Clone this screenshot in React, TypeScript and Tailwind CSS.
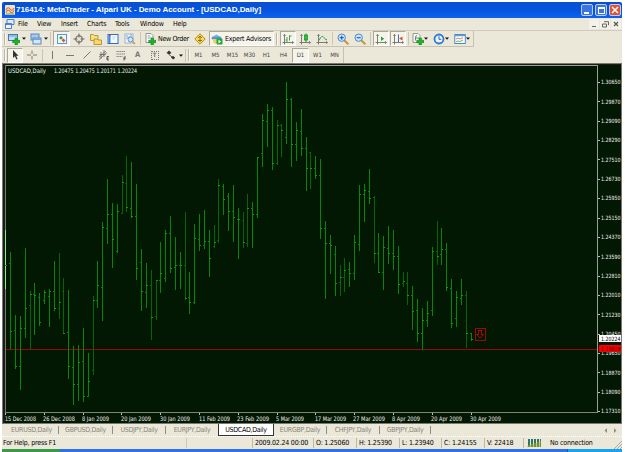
import React from "react";

const ui = "font-['DejaVu_Sans_Condensed','Noto_Sans',sans-serif]";

// x, high, low, open, close
const bars: number[][] = [
  [5,230,289,262,265],[10,252,349,263,331],[15,315,369,330,366],[20,316,390,366,328],[25,248,338,328,308],
  [30,291,349,305,294],[34,283,335,294,295],[39,293,326,297,322],[44,290,304,300,292],[49,289,327,296,291],
  [54,261,311,291,308],[59,253,319,308,302],[63,278,334,291,333],[68,290,379,332,366],[73,346,405,367,384],
  [78,345,401,384,362],[83,328,402,361,396],[88,353,397,396,381],[93,296,375,370,300],[97,261,308,300,285],
  [102,222,321,287,227],[107,179,244,228,214],[112,203,268,214,239],[117,204,253,251,211],[122,175,214,213,182],
  [126,156,212,183,207],[131,162,218,208,216],[136,184,280,216,268],[141,249,311,262,291],[146,263,308,292,285],
  [151,270,340,285,317],[156,280,320,316,280],[160,242,293,280,273],[165,230,282,278,233],[170,216,273,233,268],
  [175,237,290,267,265],[180,252,289,265,265],[185,212,300,265,298],[189,272,314,297,302],[194,224,304,302,238],
  [199,214,251,239,245],[204,210,249,245,241],[209,230,277,241,258],[214,225,248,246,242],[218,179,243,240,185],
  [223,184,215,186,199],[228,193,231,196,211],[233,185,242,211,217],[238,208,259,219,219],[243,212,248,220,242],
  [247,194,247,243,208],[252,202,248,208,214],[257,157,218,214,157],[262,114,167,153,120],[267,104,147,121,110],
  [272,107,170,110,163],[277,120,165,163,125],[281,124,157,125,130],[286,82,144,137,99],[291,98,167,99,144],
  [296,122,161,144,130],[301,109,156,131,148],[306,137,191,148,168],[310,152,189,152,168],[315,156,179,168,175],
  [320,159,239,175,228],[325,221,299,228,243],[330,235,274,243,245],[335,246,296,254,283],[340,265,296,282,277],
  [344,258,292,277,270],[349,262,287,269,273],[354,235,280,273,242],[359,185,251,244,194],[364,184,222,194,190],
  [369,169,204,191,198],[374,196,263,197,253],[378,233,273,253,272],[383,236,290,272,247],[388,226,264,248,253],
  [393,230,270,253,256],[398,246,294,256,284],[403,272,287,283,281],[407,272,305,283,295],[412,286,330,295,311],
  [417,299,342,310,333],[422,308,350,333,320],[427,301,327,320,313],[432,247,316,310,251],[437,221,265,251,256],
  [441,228,265,254,249],[446,243,291,249,287],[451,279,328,288,323],[456,291,327,318,297],[461,279,305,298,295],
  [466,291,348,295,333],[471,333,341,333,339],
];
const dim = new Set([30, 59, 63, 93, 122, 126, 151, 156, 185, 214, 218, 243, 247, 277, 281, 310, 340, 344, 374, 403, 407, 437, 466]);
const prices = ["1.30650","1.29870","1.29090","1.28290","1.27510","1.26730","1.25950","1.25150","1.24370","1.23590","1.22810","1.22010","1.21230","1.20450","1.19650","1.18870","1.18090","1.17310"];
const dates: [number, string, number][] = [
  [5,"15 Dec 2008",31],[43,"26 Dec 2008",32],[82,"8 Jan 2009",27],[121,"20 Jan 2009",30],[160,"30 Jan 2009",30],
  [199,"11 Feb 2009",31],[237,"23 Feb 2009",32],[276,"5 Mar 2009",28],[315,"17 Mar 2009",31],[353,"27 Mar 2009",32],
  [392,"8 Apr 2009",28],[431,"20 Apr 2009",31],[470,"30 Apr 2009",31],
];

function Chart() {
  return (
    <svg width="620" height="361" viewBox="2 63 620 361" className="block shrink-0 font-['DejaVu_Sans_Condensed',sans-serif]">
      <rect x="2" y="63" width="620" height="361" fill="#77786f" />
      <rect x="3" y="64" width="618" height="359" fill="#1b1b19" />
      <rect x="5" y="65" width="616" height="358" fill="#031803" />
      <g shapeRendering="crispEdges">
        <path d="M5 65.5H597.5V413" fill="none" stroke="#9a9d98" />
        <path d="M5.500 65V413" stroke="#777c77" />
        <path d="M5 412.500H598" stroke="#7f847f" />
        <path d="M5.500 230V289" stroke="#8bef8b" />
        <rect x="6" y="349" width="591" height="1" fill="#9b0808" />
        {bars.map(([x, h, l, o, c], i) => (
          <g key={x} fill={dim.has(x) ? "#066606" : "#068606"}>
            {i > 0 && <rect x={x} y={h} width="1" height={l - h} />}
            {i > 0 && <rect x={x - 1} y={o} width="1" height="1" />}
            <rect x={x} y={c} width="2" height="1" fill="#08a008" />
          </g>
        ))}
        {dates.map(([x], i) => <rect key={x} x={Math.round(5 + i * 38.8)} y="413" width="1" height="2" fill="#b9bcb9" />)}
        {prices.map((p, i) => <rect key={p} x="598" y={Math.round(82 + i * 19.36)} width="2" height="1" fill="#b9bcb9" />)}
        <rect x="475.500" y="328.500" width="10" height="12" fill="none" stroke="#a00808" />
        <path d="M478.500 330.500h3v4h2l-3.500 3.500l-3.500-3.500h2z" fill="none" stroke="#9a0a0a" />
      </g>
      <g fontSize="6.2" fill="#f0f2f0">
        <text x="8" y="73" textLength="38" lengthAdjust="spacingAndGlyphs">USDCAD,Daily</text>
        <text x="54" y="73" textLength="83" lengthAdjust="spacingAndGlyphs">1.20475 1.20475 1.20171 1.20224</text>
        {dates.map(([x, t, w]) => <text key={x} x={x} y="420.500" textLength={w} lengthAdjust="spacingAndGlyphs">{t}</text>)}
        {prices.map((p, i) => <text key={p} x="601" y={84.3 + i * 19.36} fontSize="5.8" textLength="19.4" lengthAdjust="spacingAndGlyphs">{p}</text>)}
      </g>
      <rect x="599" y="335" width="22" height="7" fill="#fff" />
      <rect x="599" y="345" width="22" height="7" fill="#f80000" />
      <g fontSize="5.8">
        <text x="601" y="341" fill="#000" textLength="19.4" lengthAdjust="spacingAndGlyphs">1.20224</text>
        <text x="601" y="350.800" fill="#5c0000" textLength="19.4" lengthAdjust="spacingAndGlyphs">1.19828</text>
      </g>
    </svg>
  );
}

function Ico({ children, w = 12 }: { children: React.ReactNode; w?: number }) {
  return <svg width={w} height="12" viewBox={`0 0 ${w} 12`} className="shrink-0">{children}</svg>;
}
function Cell({ w, on, children }: { w: string; on?: boolean; children?: React.ReactNode }) {
  return (
    <div className={`${w} flex h-[15px] shrink-0 items-center justify-center ${on ? "border border-t-[#a9a79a] border-l-[#a9a79a] border-r-white border-b-white bg-[#f5f3ea]" : ""}`}>
      {children}
    </div>
  );
}
const Grip = ({ w }: { w: string }) => <Cell w={w}><div className="h-[12px] w-[2px] border-l border-[#b9b6a6] bg-[#f8f7f0]" /></Cell>;
const Sep = ({ w }: { w: string }) => <Cell w={w}><div className="h-[13px] w-px bg-[#c9c6b6]" /></Cell>;
const Arr = ({ w }: { w: string }) => <Cell w={w}><svg width="4" height="3"><path d="M0 .5h4L2 2.700z" fill="#111" /></svg></Cell>;
const Plus = () => <path d="M7 5h2.500v2.300H12v2.400H9.500V12H7V9.700H4.700V7.300H7z" fill="#1fb32a" stroke="#0c7c18" strokeWidth=".5" />;
const Axes = () => <path d="M2.500 1.500v10M.500 9.500h11M1.300 2.700l1.200-1.300 1.200 1.300M10 8.300l1.400 1.200L10 10.700" fill="none" stroke="#6f6f6b" strokeWidth=".9" />;

function Lens({ minus }: { minus?: boolean }) {
  return <Ico><path d="M7.500 7.500l3.300 3.300" stroke="#c79a2c" strokeWidth="2" strokeLinecap="round" /><circle cx="4.700" cy="4.700" r="3.700" fill="#cfe6fb" stroke="#4a88d0" /><path d={minus ? "M2.700 4.700h4" : "M2.700 4.700h4M4.700 2.700v4"} stroke="#2468b8" strokeWidth="1.200" /></Ico>;
}

function Toolbar1() {
  return (
    <div className="flex h-[16px] w-[472px] shrink-0 items-center border-r border-b border-[#c5c2b2]">
      <Grip w="w-[5px]" />
      <Cell w="w-[14px]"><Ico><rect x=".5" y="1.500" width="9" height="6" fill="#c9def5" stroke="#3e79bb" /><path d="M1 3h8" stroke="#5a96dc" /><Plus /></Ico></Cell>
      <Arr w="w-[5px]" /><Cell w="w-[3px]" />
      <Cell w="w-[14px]"><Ico><rect x="1" y="1" width="8" height="6" fill="#a7c9ef" stroke="#5788c1" /><rect x="3" y="5" width="8" height="6" fill="#d6e7fa" stroke="#5788c1" /><path d="M3 6.200h8" stroke="#6d9ddc" strokeWidth="1.500" /></Ico></Cell>
      <Arr w="w-[5px]" /><Sep w="w-[5px]" />
      <Cell w="w-[17px]" on><Ico><rect x="1.500" y="1.500" width="9" height="9" fill="#eef6fd" stroke="#5a9ad4" /><path d="M3 5l2-2 2 2-2 1.500z" fill="#26a43a" /><path d="M5.500 7l2-1.500 2 2-2 2z" fill="#e0542e" /></Ico></Cell>
      <Cell w="w-[17px]"><Ico><circle cx="6" cy="6" r="3.200" fill="none" stroke="#6b6a65" strokeWidth="1.100" /><path d="M6 .500v4M6 7.500v4M.500 6h4M7.500 6h4" stroke="#6b6a65" strokeWidth="1.100" /></Ico></Cell>
      <Cell w="w-[17px]"><Ico><path d="M.500 1.500h3l1 1h3.500v5H.500z" fill="#f6df83" stroke="#b99935" /><path d="M4 6h3l1 1h3.500v4.500H4z" fill="#f9d967" stroke="#b99935" /></Ico></Cell>
      <Cell w="w-[17px]"><Ico><rect x="1" y="1.500" width="10" height="9" fill="#f5faff" stroke="#2f6fbe" /><path d="M2.500 2v8" stroke="#3f86d8" strokeWidth="2" /><path d="M5 4h4M5 6h3" stroke="#b7cce4" strokeWidth=".7" /><circle cx="3" cy="2.500" r=".7" fill="#e33" /></Ico></Cell>
      <Cell w="w-[17px]"><Ico><rect x="1" y="1" width="8" height="9" fill="#f5f7fb" stroke="#9cb3d0" /><path d="M3 2v4M5 3v5M7 1v5" stroke="#85a6ce" /><circle cx="6.500" cy="6.500" r="2.500" fill="#cfe6fb" stroke="#5e92cb" /><path d="M8.500 8.500l2.500 2.500" stroke="#c99f37" strokeWidth="1.600" /></Ico></Cell>
      <Sep w="w-[5px]" />
      <Cell w="w-[14px]"><Ico><path d="M2 .500h5l2 2v7H2z" fill="#fff" stroke="#8b9797" /><path d="M3.500 3h3M3.500 5h4" stroke="#7c8d8d" strokeWidth=".8" /><Plus /></Ico></Cell>
      <span className="w-[35px] shrink-0 pl-px text-[7px] leading-[10px] tracking-[-0.32px] whitespace-nowrap text-black">New Order</span>
      <Cell w="w-[16px]"><Ico><path d="M6 .800L11.200 6 6 11.200.800 6z" fill="#f7dc62" stroke="#b08c1c" /><path d="M6 3v6M4 5l2-2 2 2M4 7.500h4" fill="none" stroke="#8a6a10" strokeWidth=".9" /></Ico></Cell>
      <Cell w="w-[1px]" />
      <Cell w="w-[65px]" on>
        <Ico><ellipse cx="5.500" cy="5" rx="5" ry="2" fill="#4d97d9" /><path d="M2.500 4Q5.500-1 8.500 4z" fill="#72b3e7" /><path d="M2 6h5v3l-2.500 2L2 9z" fill="#f1ce5a" /><rect x="5.500" y="5.500" width="6" height="6" rx="1" fill="#22a63a" /><path d="M7.500 6.800v3.600l2.700-1.800z" fill="#fff" /></Ico>
        <span className="ml-[2px] w-[47px] text-[7px] leading-[10px] tracking-[-0.22px] whitespace-nowrap text-black">Expert Advisors</span>
      </Cell>
      <Grip w="w-[6px]" />
      <Cell w="w-[16px]" on><Ico><Axes /><path d="M5 4v5M7.500 2.500v5M7.500 3h2M3.500 7h1.500" stroke="#2d9d3c" strokeWidth=".9" /></Ico></Cell>
      <Cell w="w-[17px]"><Ico><Axes /><path d="M7 .500v8.500" stroke="#128a28" /><rect x="5.500" y="2" width="3" height="5" fill="#29c440" stroke="#128a28" strokeWidth=".7" /></Ico></Cell>
      <Cell w="w-[17px]"><Ico><Axes /><path d="M3 7.500Q6 1 8 4.500T11 6.500" fill="none" stroke="#3ba548" /></Ico></Cell>
      <Sep w="w-[4px]" />
      <Cell w="w-[17px]"><Lens /></Cell><Cell w="w-[17px]"><Lens minus /></Cell>
      <Sep w="w-[5px]" />
      <Cell w="w-[16px]" on><Ico><Axes /><path d="M6 3.500v4.500l3.200-2.200z" fill="#1da536" /></Ico></Cell>
      <Cell w="w-[1px]" />
      <Cell w="w-[16px]" on><Ico><Axes /><path d="M6.500 1.500v7.500" stroke="#3b6db4" /><path d="M10.500 3.500v4L7.200 5.500z" fill="#d8502a" /></Ico></Cell>
      <Sep w="w-[4px]" /><Cell w="w-[1px]" />
      <Cell w="w-[13px]"><Ico><path d="M1 .500h5l2 2v7H1z" fill="#f6f9f6" stroke="#8e9b8e" /><path d="M3 5h4M5 2.500q-1.500 0-1.500 2v3" fill="none" stroke="#566" strokeWidth=".8" /><Plus /></Ico></Cell>
      <Arr w="w-[4px]" /><Cell w="w-[4px]" />
      <Cell w="w-[13px]"><Ico><circle cx="6" cy="6" r="4.500" fill="#e9f4ff" stroke="#2f78cc" strokeWidth="1.800" /><path d="M6 3.200V6.300h2.300" fill="none" stroke="#29568e" strokeWidth=".9" /></Ico></Cell>
      <Arr w="w-[4px]" /><Cell w="w-[4px]" />
      <Cell w="w-[13px]"><Ico><rect x=".8" y="1.500" width="10.500" height="9" fill="#fff" stroke="#4c86c6" /><path d="M1 2.500h10" stroke="#5b9be0" strokeWidth="1.500" /><path d="M2 6l2-1 2 1 3-1.500" fill="none" stroke="#d05b32" strokeWidth=".8" /><path d="M2 9l2-1 2 .5 3-1.500" fill="none" stroke="#3ba548" strokeWidth=".8" /></Ico></Cell>
      <Arr w="w-[4px]" />
    </div>
  );
}

const frames = ["M1", "M5", "M15", "M30", "H1", "H4", "D1", "W1", "MN"];
function Toolbar2() {
  return (
    <div className="flex h-[16px] w-[342px] shrink-0 items-center border-r border-[#c5c2b2]">
      <Grip w="w-[5px]" />
      <Cell w="w-[16px]" on><Ico><path d="M4 1v8l1.900-1.700L7.300 10.500l1.300-.6L7.200 6.800H9.500z" fill="#333" /></Ico></Cell>
      <Cell w="w-[18px]"><Ico><path d="M6 1.500v3.500M6 7v3.500M1 6h4M7 6h4" stroke="#6f6f6a" strokeWidth=".9" /></Ico></Cell>
      <Sep w="w-[3px]" />
      <Cell w="w-[17px]"><Ico><path d="M5.500 2v8" stroke="#777" /></Ico></Cell>
      <Cell w="w-[17px]"><Ico><path d="M2 6.500h8" stroke="#777" /></Ico></Cell>
      <Cell w="w-[17px]"><Ico><path d="M2.500 9.500l7-7" stroke="#777" /></Ico></Cell>
      <Cell w="w-[17px]"><Ico><path d="M1 8l7-6M1 10.500l8-7M3 3v7M6 1v7M1.500 5.500h6" stroke="#666" strokeWidth=".8" /><path d="M11 7.500H9v3.500h2M9 9.200h1.700" fill="none" stroke="#333" strokeWidth=".8" /></Ico></Cell>
      <Cell w="w-[17px]"><Ico><path d="M1.500 2.500h9M1.500 5h9M1.500 7.500h6" stroke="#777" strokeWidth=".9" strokeDasharray="1.300 .5" /><path d="M11 8H9v3.500M9 9.700h1.700" fill="none" stroke="#333" strokeWidth=".8" /></Ico></Cell>
      <Cell w="w-[17px]"><span className="text-[7.500px] leading-none font-bold text-[#777]">A</span></Cell>
      <Cell w="w-[17px]"><div className="flex h-[9px] w-[8px] items-center justify-center border border-dotted border-[#777] text-[6px] leading-none font-bold text-[#777]">T</div></Cell>
      <Cell w="w-[15px]"><Ico><path d="M1.500 4l2.500-2.500L6.500 4 4 5.500z" fill="#333" /><path d="M3.500 5l4 3.500" stroke="#555" /><path d="M6 8.500l2-1.800 2.200 2L8.200 10.500z" fill="#333" /></Ico></Cell>
      <Arr w="w-[5px]" /><Sep w="w-[4px]" /><Grip w="w-[3px]" />
      {frames.map((f) => (
        <Cell key={f} w="w-[17px]" on={f === "D1"}><span className="text-[6px] leading-none text-[#44443f]">{f}</span></Cell>
      ))}
    </div>
  );
}

function Logo() {
  return <svg width="10" height="10" viewBox="0 0 10 10" className="shrink-0"><rect width="10" height="10" rx="1" fill="#f3e3c7" /><path d="M1 5q2-4 4-1t4-1M1 7.500q2-4 4-1t4-1" fill="none" stroke="#d96b3d" strokeWidth="1.100" /><path d="M1 9h8" stroke="#6c9a55" /></svg>;
}
const winBtn = "flex h-[12px] w-[12px] items-center justify-center rounded-[2px] border border-[#b9cdf6]";

export default function App() {
  const menu: [string, string][] = [["File","w-[19px]"],["View","w-[24px]"],["Insert","w-[26px]"],["Charts","w-[28px]"],["Tools","w-[25px]"],["Window","w-[33px]"],["Help","w-[20px]"]];
  const tabs: [string, string][] = [["EURUSD,Daily","w-[54px]"],["GBPUSD,Daily","w-[54px]"],["USDJPY,Daily","w-[53px]"],["EURJPY,Daily","w-[52px]"],["USDCAD,Daily","w-[56px]"],["EURGBP,Daily","w-[53px]"],["CHFJPY,Daily","w-[53px]"],["GBPJPY,Daily","w-[51px]"]];
  const stat: [string, string][] = [["2009.02.24 00:00","w-[61px]"],["O: 1.25060","w-[43px]"],["H: 1.25390","w-[43px]"],["L: 1.23940","w-[42px]"],["C: 1.24155","w-[43px]"],["V: 22418","w-[39px]"]];
  return (
    <div className={`${ui} flex h-[452px] w-[625px] flex-col overflow-hidden bg-white pt-[2px] pr-[3px] text-[#111]`}>
      <div className="ml-[2px] flex h-[16px] shrink-0 items-center rounded-t-[2px] bg-linear-to-b from-[#0a4fcf] via-[#0553dd] to-[#0c62f0] pr-[1px] pl-[3px]">
        <Logo />
        <span className="ml-[1px] font-['Liberation_Sans',Arial,sans-serif] text-[8px] leading-[12px] font-bold tracking-[-0.06px] whitespace-nowrap text-white">716414: MetaTrader - Alpari UK - Demo Account - [USDCAD,Daily]</span>
        <div className="ml-auto flex gap-[2px]">
          <div className={`${winBtn} bg-[#3c74e4]`}><div className="mt-[5px] mr-[2px] h-[2px] w-[5px] bg-white" /></div>
          <div className={`${winBtn} bg-[#3c74e4]`}><div className="h-[7px] w-[7px] border border-t-2 border-white" /></div>
          <div className={`${winBtn} bg-[#dd5531]`}><svg width="8" height="8"><path d="M1 1l6 6M7 1L1 7" stroke="#fff" strokeWidth="1.500" /></svg></div>
        </div>
      </div>
      <div className="ml-[2px] flex h-[431px] shrink-0 flex-col bg-[#ebe8d9]">
        <div className="flex h-[13px] shrink-0 items-center border-b border-[#cfccbd] pl-[3px]">
          <svg width="10" height="10" className="mr-[3px] shrink-0"><path d="M2 .500h7v5H2z" fill="#dceafb" stroke="#4b7fca" /><path d="M.500 4.500h6v5h-6z" fill="#f0f6fe" stroke="#4b7fca" /><path d="M.500 5.200h6" stroke="#4b7fca" strokeWidth="1.500" /></svg>
          {menu.map(([m, w]) => <span key={m} className={`${w} shrink-0 text-[7px] leading-[10px] tracking-[-0.2px] text-black`}>{m}</span>)}
          <div className="ml-auto flex gap-[1px] pr-[1px] text-[#555]">
            <div className="flex h-[10px] w-[10px] items-center justify-center bg-[#f3f1e8]"><div className="mt-[5px] h-[1px] w-[4px] bg-[#666]" /></div>
            <div className="flex h-[10px] w-[10px] items-center justify-center bg-[#f3f1e8]"><svg width="7" height="7"><path d="M2 .700h4.500v3.500M.500 3h4v3h-4z" fill="none" stroke="#666" /></svg></div>
            <div className="flex h-[10px] w-[10px] items-center justify-center bg-[#f3f1e8]"><svg width="6" height="6"><path d="M1 1l4 4M5 1L1 5" stroke="#555" strokeWidth="1.200" /></svg></div>
          </div>
        </div>
        <Toolbar1 />
        <Toolbar2 />
        <Chart />
        <div className="flex h-[13px] shrink-0 items-start border-b border-dotted border-white pl-[3px]">
          {tabs.map(([t, w]) => (
            <div key={t} className={`${w} flex h-[12px] shrink-0 items-center justify-center text-[7px] leading-[10px] tracking-[-0.3px] ${t === "USDCAD,Daily" ? "border border-t-0 border-[#333] bg-white text-black" : "text-[#88867a]"}`}>
              <span className="grow text-center">{t}</span>
              {t !== "USDCAD,Daily" && t !== "EURJPY,Daily" && <span className="h-[8px] w-px bg-[#8f8d80]" />}
            </div>
          ))}
          <svg width="18" height="8" className="mt-[3px] mr-[2px] ml-auto"><path d="M5 1v5L2.500 3.500zM12 1v5l2.500-2.500z" fill="#8f8d80" /></svg>
        </div>
        <div className="flex h-[12px] shrink-0 items-center pl-[1px] text-[7px] leading-[10px] tracking-[-0.2px] text-black">
          <span className="w-[183px]">For Help, press F1</span>
          <span className="flex h-[10px] w-[66px] border-l border-[#cbc8b8]" />
          {stat.map(([s, w]) => <span key={s} className={`${w} h-[10px] shrink-0 border-l border-[#bcb9a9] pl-[2px] whitespace-nowrap`}>{s}</span>)}
          <div className="flex h-[10px] items-center border-l border-[#bcb9a9] pl-[3px]">
            <svg width="14" height="8" shapeRendering="crispEdges"><path d="M1.500 0v8M4.500 0v8M7.500 0v8M10.500 0v8M13.500 0v8" stroke="#2c7468" strokeWidth="2" /><path d="M0 7l14-5v6H0z" fill="#a5a91c" opacity=".55" /></svg>
            <span className="ml-[9px] whitespace-nowrap">No connection</span>
          </div>
          <svg width="9" height="9" className="mt-[2px] ml-auto"><path d="M1 9l8-8M4 9l5-5M7 9l2-2" stroke="#aaa797" /></svg>
        </div>
      </div>
      <div className="ml-[2px] flex h-[3px] shrink-0 bg-[#2f72e2]">
        <div className="w-[58px] rounded-tr-[3px] bg-[#3b9a48]" />
        <div className="grow" />
        <div className="w-[55px] border-l border-[#0d5cb8] bg-[#19a2f0]" />
      </div>
    </div>
  );
}
